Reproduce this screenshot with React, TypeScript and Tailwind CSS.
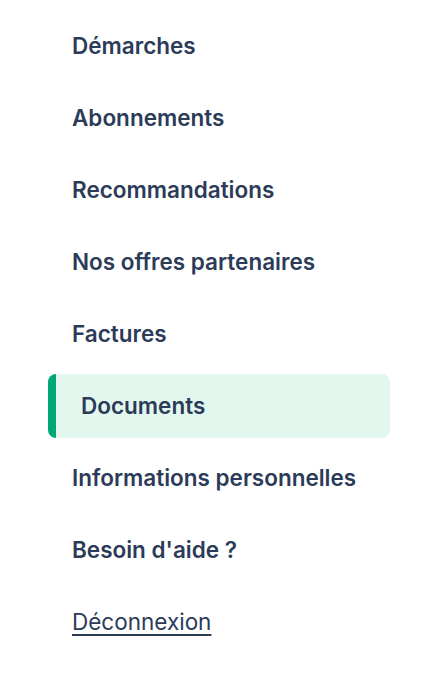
const items = [
  'Démarches',
  'Abonnements',
  'Recommandations',
  'Nos offres partenaires',
  'Factures',
  'Documents',
  'Informations personnelles',
  "Besoin d'aide ?",
];

export default function App() {
  const active = 'Documents';

  return (
    <div className="min-h-screen bg-white pt-[14px] pl-12 pr-10 font-['Inter','Noto_Sans',sans-serif] text-[#2b3b58]">
      <nav className="flex flex-col gap-2">
        {items.map((item) =>
          item === active ? (
            <a
              key={item}
              className="flex h-16 items-center rounded-lg border-l-8 border-[#00a878] bg-[#e2f8ef] pl-[25px] text-[22.5px] font-semibold"
            >
              {item}
            </a>
          ) : (
            <a key={item} className="flex h-16 items-center pl-6 text-[22.5px] font-semibold">
              {item}
            </a>
          )
        )}
        <a className="flex h-16 items-center pl-6 text-[22.5px] underline decoration-2 underline-offset-4">
          Déconnexion
        </a>
      </nav>
    </div>
  );
}
